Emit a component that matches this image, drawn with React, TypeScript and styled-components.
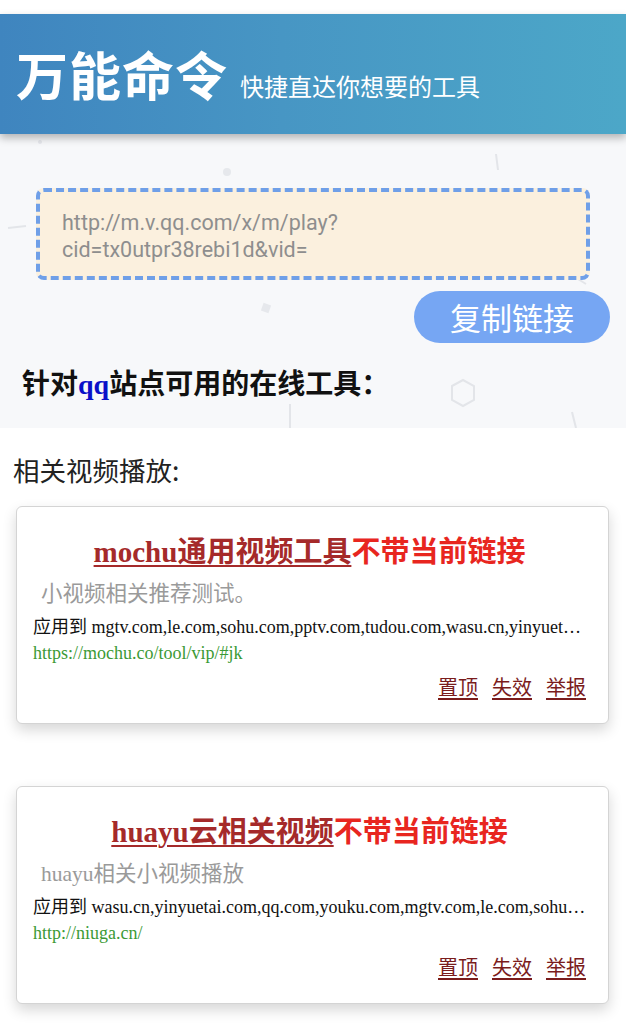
import * as React from "react";
import styled, { createGlobalStyle } from "styled-components";

const GlobalStyle = createGlobalStyle`
  html, body {
    margin: 0;
    padding: 0;
    background: #fff;
  }
  body {
    font-family: "Noto Sans CJK SC", "Noto Sans", sans-serif;
    color: #111;
  }
`;

const CJK = `"Noto Sans CJK SC", sans-serif`;
const SERIF = `"Liberation Serif", "Noto Sans CJK SC", serif`;

const Page = styled.div`
  padding-top: 14px;
  width: 626px;
`;

const Header = styled.header`
  position: relative;
  z-index: 2;
  height: 120px;
  box-sizing: border-box;
  padding: 34px 0 0 16px;
  display: flex;
  align-items: baseline;
  gap: 12px;
  background: linear-gradient(90deg, #3f85bf 0%, #4796c4 45%, #4ca7c8 100%);
  box-shadow: 0 4px 8px rgba(0, 0, 0, 0.28);
`;

const Title = styled.h1`
  margin: 0;
  font-family: ${CJK};
  font-size: 52px;
  line-height: 52px;
  font-weight: 700;
  color: #fff;
  letter-spacing: 1px;
`;

const Subtitle = styled.span`
  font-family: ${CJK};
  font-size: 24px;
  color: #fff;
  font-weight: 400;
`;

const Tools = styled.section`
  position: relative;
  overflow: hidden;
  height: 294px;
  box-sizing: border-box;
  padding: 54px 16px 0 36px;
  background: #f7f8fa;
  display: flex;
  flex-direction: column;
`;

const Deco = styled.svg`
  position: absolute;
  inset: 0;
  width: 100%;
  height: 100%;
  pointer-events: none;
`;

const LinkBox = styled.div`
  position: relative;
  width: 554px;
  height: 92px;
  box-sizing: border-box;
  padding: 17px 24px 0 22px;
  background: #fbf0de;
  border: 4px dashed #6f9fe8;
  border-radius: 8px;
  font-family: "Roboto", "Noto Sans", sans-serif;
  font-size: 21.5px;
  line-height: 27px;
  color: #8e8e8e;
`;

const CopyButton = styled.button`
  position: relative;
  align-self: flex-end;
  margin-top: 11px;
  width: 196px;
  height: 52px;
  border: none;
  border-radius: 26px;
  background: #76a6f3;
  color: #fff;
  font-family: ${CJK};
  font-size: 31px;
  line-height: 52px;
  padding: 0;
`;

const ToolsHeading = styled.h2`
  position: relative;
  margin: 20px 0 0 -14px;
  font-family: ${CJK};
  font-size: 28px;
  line-height: 38px;
  font-weight: 700;
  color: #111;
`;

const Site = styled.span`
  font-family: "Liberation Serif", serif;
  font-weight: 700;
  color: #0a10c8;
`;

const Related = styled.section`
  padding: 24px 16px 40px 16px;
`;

const RelatedHeading = styled.h3`
  margin: 0 0 18px -3px;
  font-family: ${CJK};
  font-size: 26.5px;
  line-height: 36px;
  font-weight: 400;
  color: #222;
`;

const CardList = styled.div`
  display: flex;
  flex-direction: column;
  gap: 62px;
`;

const Card = styled.div`
  width: 593px;
  height: 218px;
  box-sizing: border-box;
  padding: 27px 22px 0 16px;
  background: #fff;
  border: 1px solid #d4d4d4;
  border-radius: 6px;
  box-shadow: 0 6px 14px rgba(0, 0, 0, 0.16);
`;

const CardTitle = styled.div`
  text-align: center;
  font-family: ${SERIF};
  font-size: 29px;
  line-height: 36px;
  font-weight: 700;
`;

const TitleLink = styled.a`
  color: #a52a2a;
  text-decoration: underline;
  text-decoration-thickness: 2px;
  text-underline-offset: 3px;
`;

const TitleNote = styled.span`
  color: #e8261f;
`;

const Desc = styled.div`
  margin-top: 9px;
  padding-left: 8px;
  font-family: ${SERIF};
  font-size: 21.5px;
  line-height: 30px;
  color: #9a9a9a;
`;

const Applies = styled.div`
  margin-top: 5px;
  font-family: ${SERIF};
  font-size: 18px;
  line-height: 26px;
  color: #111;
  white-space: nowrap;
  overflow: hidden;
  text-overflow: ellipsis;
`;

const Url = styled.div`
  font-family: ${SERIF};
  font-size: 18px;
  line-height: 26px;
  color: #3b9a35;
`;

const Actions = styled.div`
  margin-top: 7px;
  display: flex;
  justify-content: flex-end;
  gap: 14px;
`;

const ActionLink = styled.a`
  font-family: ${CJK};
  font-size: 20px;
  line-height: 28px;
  color: #7a1c1c;
  text-decoration: underline;
  text-underline-offset: 3px;
`;

const cards = [
  {
    name: "mochu通用视频工具",
    desc: "小视频相关推荐测试。",
    sites:
      "mgtv.com,le.com,sohu.com,pptv.com,tudou.com,wasu.cn,yinyuetai.com,qq.com,youku.com,iqiyi.com",
    url: "https://mochu.co/tool/vip/#jk"
  },
  {
    name: "huayu云相关视频",
    desc: "huayu相关小视频播放",
    sites:
      "wasu.cn,yinyuetai.com,qq.com,youku.com,mgtv.com,le.com,sohu.com,pptv.com,tudou.com",
    url: "http://niuga.cn/"
  }
];

const Decorations = () => (
  <Deco viewBox="0 0 626 294">
    <g fill="none" stroke="#e3e5e9" strokeWidth="2">
      <polygon points="452,252 463,246 474,252 474,266 463,272 452,266" />
      <path d="M8 94 L26 92" />
      <path d="M496 20 L498 36" />
      <path d="M572 278 L576 294" />
      <path d="M290 270 L290 294" />
      <path d="M570 140 L586 150" />
    </g>
    <g fill="#e6e8ec">
      <circle cx="227" cy="38" r="4" />
      <rect x="262" y="170" width="8" height="8" transform="rotate(20 266 174)" />
      <circle cx="40" cy="8" r="2" />
      <circle cx="470" cy="140" r="2" />
    </g>
  </Deco>
);

export default function App() {
  return (
    <Page>
      <GlobalStyle />
      <Header>
        <Title>万能命令</Title>
        <Subtitle>快捷直达你想要的工具</Subtitle>
      </Header>
      <Tools>
        <Decorations />
        <LinkBox>http://m.v.qq.com/x/m/play?cid=tx0utpr38rebi1d&amp;vid=</LinkBox>
        <CopyButton>复制链接</CopyButton>
        <ToolsHeading>
          针对<Site>qq</Site>站点可用的在线工具：
        </ToolsHeading>
      </Tools>
      <Related>
        <RelatedHeading>相关视频播放:</RelatedHeading>
        <CardList>
          {cards.map((c) => (
            <Card key={c.name}>
              <CardTitle>
                <TitleLink>{c.name}</TitleLink>
                <TitleNote>不带当前链接</TitleNote>
              </CardTitle>
              <Desc>{c.desc}</Desc>
              <Applies>应用到 {c.sites}</Applies>
              <Url>{c.url}</Url>
              <Actions>
                <ActionLink>置顶</ActionLink>
                <ActionLink>失效</ActionLink>
                <ActionLink>举报</ActionLink>
              </Actions>
            </Card>
          ))}
        </CardList>
      </Related>
    </Page>
  );
}
